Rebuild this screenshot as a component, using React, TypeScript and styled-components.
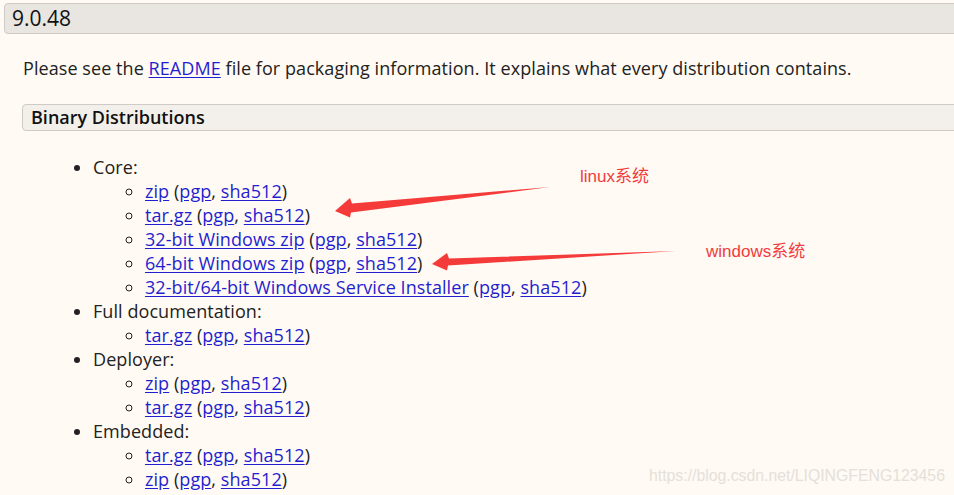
import React from 'react';
import styled, { createGlobalStyle } from 'styled-components';

const GlobalStyle = createGlobalStyle`
  html, body {
    margin: 0;
    padding: 0;
    background: #fffaf4;
  }
  body {
    font-family: "Open Sans", "Noto Sans", sans-serif;
    color: #222;
    overflow: hidden;
  }
`;

type Item = { label: string };

const groups: { title: string; items: string[] }[] = [
  {
    title: 'Core:',
    items: [
      'zip',
      'tar.gz',
      '32-bit Windows zip',
      '64-bit Windows zip',
      '32-bit/64-bit Windows Service Installer',
    ],
  },
  { title: 'Full documentation:', items: ['tar.gz'] },
  { title: 'Deployer:', items: ['zip', 'tar.gz'] },
  { title: 'Embedded:', items: ['tar.gz', 'zip'] },
];

const Download: React.FC<Item> = ({ label }) => (
  <>
    <A href="#">{label}</A> (<A href="#">pgp</A>, <A href="#">sha512</A>)
  </>
);

const App: React.FC = () => (
  <Page>
    <GlobalStyle />
    <VersionBar>9.0.48</VersionBar>
    <Content>
      <Intro>
        Please see the <A href="#">README</A> file for packaging information. It
        explains what every distribution contains.
      </Intro>
      <SectionBar>Binary Distributions</SectionBar>
      <GroupList>
        {groups.map((g) => (
          <li key={g.title}>
            {g.title}
            <SubList>
              {g.items.map((it, i) => (
                <li key={i}>
                  <Download label={it} />
                </li>
              ))}
            </SubList>
          </li>
        ))}
      </GroupList>
    </Content>

    {/* annotation arrows drawn over the page */}
    <Overlay width="954" height="495" viewBox="0 0 954 495">
      <path d="M550 187 L352 203.5 L350 198 L335 211 L350 217.5 L351 212.5 Z" fill="#f53a3a" />
      <path d="M676 251 L449 258.5 L447 253 L432 264 L447 270.5 L448 265.5 Z" fill="#f53a3a" />
    </Overlay>
    <Note style={{ left: 580, top: 162 }}>linux系统</Note>
    <Note style={{ left: 706, top: 237 }}>windows系统</Note>
    <Watermark>https://blog.csdn.net/LIQINGFENG123456</Watermark>
  </Page>
);

const Page = styled.div`
  position: relative;
  width: 954px;
  height: 495px;
  padding: 3px 0 0 4px;
  box-sizing: border-box;
  overflow: hidden;
`;

const VersionBar = styled.div`
  height: 29px;
  line-height: 29px;
  padding-left: 7px;
  margin-right: -20px;
  background: #e9e5e0;
  border: 1px solid #cfcac5;
  border-radius: 4px;
  font-size: 21px;
  font-weight: 500;
  color: #111;
`;

const Content = styled.div`
  padding-left: 18px;
`;

const Intro = styled.p`
  margin: 22px 0 24px 1px;
  font-size: 18px;
  letter-spacing: 0.07px;
  line-height: 24px;
`;

const SectionBar = styled.div`
  height: 25px;
  line-height: 25px;
  padding-left: 8px;
  margin-right: -20px;
  background: #f3f0eb;
  border: 1px solid #cfcac5;
  border-radius: 4px;
  font-size: 18px;
  font-weight: 600;
  color: #111;
`;

const GroupList = styled.ul`
  margin: 24px 0 0;
  padding-left: 71px;
  font-size: 18px;
  letter-spacing: 0.07px;
  line-height: 24px;
  list-style: disc;
`;

const SubList = styled.ul`
  margin: 0;
  padding-left: 52px;
  list-style: circle;
`;

const A = styled.a`
  color: #1f1fcf;
  text-decoration: underline;
  text-underline-offset: 2px;
`;

const Overlay = styled.svg`
  position: absolute;
  left: 0;
  top: 0;
  pointer-events: none;
`;

const Note = styled.div`
  position: absolute;
  font-family: "Liberation Sans", "Noto Sans CJK SC", sans-serif;
  font-size: 17px;
  color: #f23c3c;
  white-space: nowrap;
`;

const Watermark = styled.div`
  position: absolute;
  left: 649px;
  top: 467px;
  font-family: "Liberation Sans", Arial, sans-serif;
  font-size: 15.8px;
  color: #e5e0da;
  white-space: nowrap;
`;

export default App;
